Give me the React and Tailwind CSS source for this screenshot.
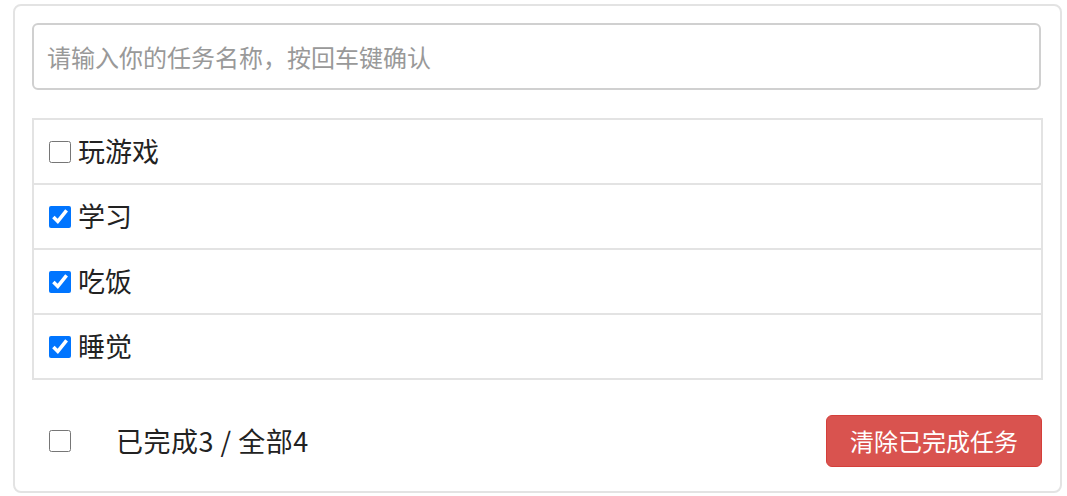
import { useState } from 'react'

export default function App() {
  const [todos, setTodos] = useState([
    { id: 1, name: '玩游戏', done: false },
    { id: 2, name: '学习', done: true },
    { id: 3, name: '吃饭', done: true },
    { id: 4, name: '睡觉', done: true },
  ])

  const doneCount = todos.filter(t => t.done).length
  const font = { fontFamily: '"Noto Sans CJK SC", "Noto Sans", sans-serif' }

  function toggle(id) {
    setTodos(todos.map(t => (t.id === id ? { ...t, done: !t.done } : t)))
  }

  return (
    <div className="w-[1067px] h-[496px] bg-white pt-[4px] pl-[13px]" style={font}>
      <div className="w-[1049px] h-[489px] border-2 border-[#e3e3e3] rounded-[8px] pl-[17px] pt-[17px]">
        {/* 输入框 */}
        <input
          type="text"
          placeholder="请输入你的任务名称，按回车键确认"
          className="block w-[1009px] h-[67px] border-2 border-[#d0d0d0] rounded-[6px] px-[13px] text-[24px] text-[#555] placeholder:text-[#999] outline-none"
        />

        {/* 列表 */}
        <ul className="mt-[28px] w-[1011px] border-2 border-[#e3e3e3]">
          {todos.map((t, i) => (
            <li
              key={t.id}
              className={`h-[63px] box-content flex items-center pl-[15px] ${i > 0 ? 'border-t-2 border-[#e3e3e3]' : ''}`}
            >
              <label className="flex items-center text-[27px] text-[#222]">
                <input
                  type="checkbox"
                  checked={t.done}
                  onChange={() => toggle(t.id)}
                  className="w-[22px] h-[22px] m-0 mr-[7px] accent-[#0075ff]"
                />
                {t.name}
              </label>
            </li>
          ))}
        </ul>

        {/* 底部 */}
        <div className="mt-[35px] w-[1010px] flex items-center justify-between">
          <div className="flex items-center pl-[17px]">
            <input type="checkbox" checked={false} readOnly className="w-[22px] h-[22px] m-0" />
            <span className="ml-[45px] text-[27px] text-[#222] tracking-[0.5px]">
              已完成{doneCount} / 全部{todos.length}
            </span>
          </div>
          <button className="w-[216px] h-[52px] bg-[#d9534f] border border-[#d43f3a] rounded-[6px] text-white text-[24px]">
            清除已完成任务
          </button>
        </div>
      </div>
    </div>
  )
}
